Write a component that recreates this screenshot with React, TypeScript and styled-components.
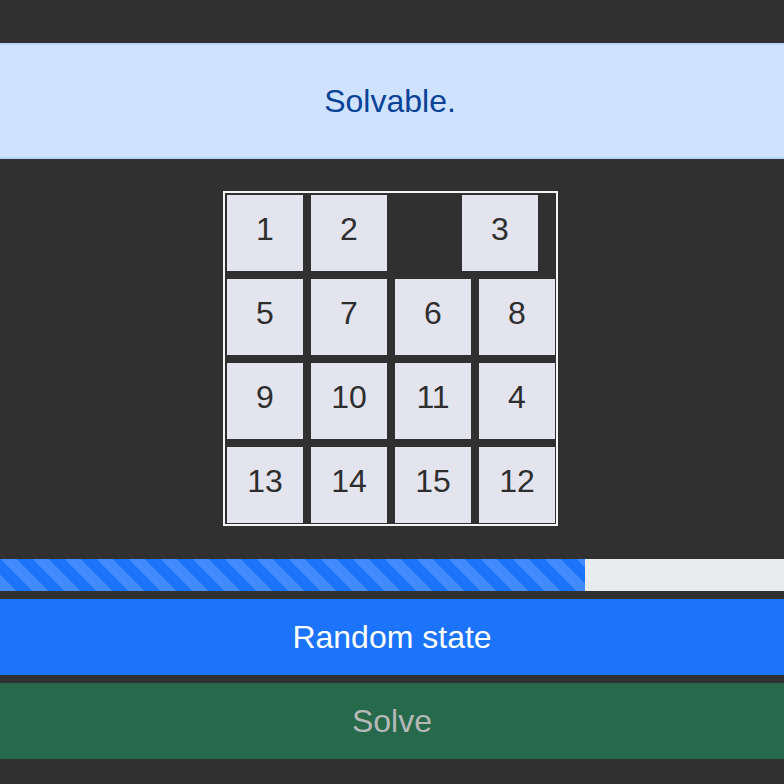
import React from "react";
import styled, { createGlobalStyle } from "styled-components";

const Global = createGlobalStyle`
  html, body {
    margin: 0;
    padding: 0;
    background: #303030;
    font-family: "Liberation Sans", Arial, sans-serif;
  }
  * { box-sizing: border-box; }
`;

const Page = styled.div`
  display: flex;
  flex-direction: column;
  align-items: stretch;
  padding-top: 43px;
  width: 784px;
  height: 784px;
`;

const Alert = styled.div`
  background: #cfe2ff;
  border-top: 2px solid #b6d4fe;
  border-bottom: 2px solid #b6d4fe;
  color: #084298;
  padding: 32px 36px 32px 32px;
  font-size: 32px;
  line-height: 48px;
  text-align: center;
  margin-bottom: 32px;
`;

const BoardWrap = styled.div`
  display: flex;
  justify-content: center;
  padding-right: 3px;
  margin-bottom: 33px;
`;

const Board = styled.div`
  display: grid;
  grid-template-columns: repeat(4, 76px);
  grid-auto-rows: 76px;
  gap: 8px;
  border: 2px solid #f4f4f4;
  padding: 2px 1px 1px 2px;
`;

const Tile = styled.div<{ $shift?: number }>`
  background: #e4e4ef;
  color: #2e2e2e;
  font-size: 32px;
  line-height: 48px;
  padding-top: 10px;
  text-align: center;
  transform: translateX(${(p) => p.$shift ?? 0}px);
`;

const Empty = styled.div``;

const Progress = styled.div`
  height: 32px;
  background: #e9ecef;
  display: flex;
  margin-bottom: 8px;
`;

const Bar = styled.div`
  height: 100%;
  background-color: #1b74fb;
  background-image: linear-gradient(
    45deg,
    rgba(255, 255, 255, 0.17) 25%,
    transparent 25%,
    transparent 50%,
    rgba(255, 255, 255, 0.17) 50%,
    rgba(255, 255, 255, 0.17) 75%,
    transparent 75%,
    transparent
  );
  background-size: 32px 32px;
`;

const Button = styled.button<{ $variant: "primary" | "success" }>`
  display: block;
  width: 100%;
  height: 76px;
  border: none;
  border-radius: 0;
  margin: 0 0 8px 0;
  padding: 0;
  font-family: "Liberation Sans", Arial, sans-serif;
  font-size: 32px;
  line-height: 48px;
  text-align: center;
  background: ${(p) => (p.$variant === "primary" ? "#1b74fb" : "#27694b")};
  color: ${(p) => (p.$variant === "primary" ? "#ffffff" : "#b5b8b6")};
`;

const cells: (number | null)[] = [1, 2, null, 3, 5, 7, 6, 8, 9, 10, 11, 4, 13, 14, 15, 12];

export default function App() {
  const progress = 74.6;
  return (
    <>
      <Global />
      <Page>
        <Alert>Solvable.</Alert>
        <BoardWrap>
          <Board>
            {cells.map((c, i) =>
              c === null ? (
                <Empty key={i} />
              ) : (
                <Tile key={i} $shift={c === 3 ? -17 : 0}>
                  {c}
                </Tile>
              )
            )}
          </Board>
        </BoardWrap>
        <Progress>
          <Bar style={{ width: `${progress}%` }} />
        </Progress>
        <Button $variant="primary">Random state</Button>
        <Button $variant="success" disabled>
          Solve
        </Button>
      </Page>
    </>
  );
}
